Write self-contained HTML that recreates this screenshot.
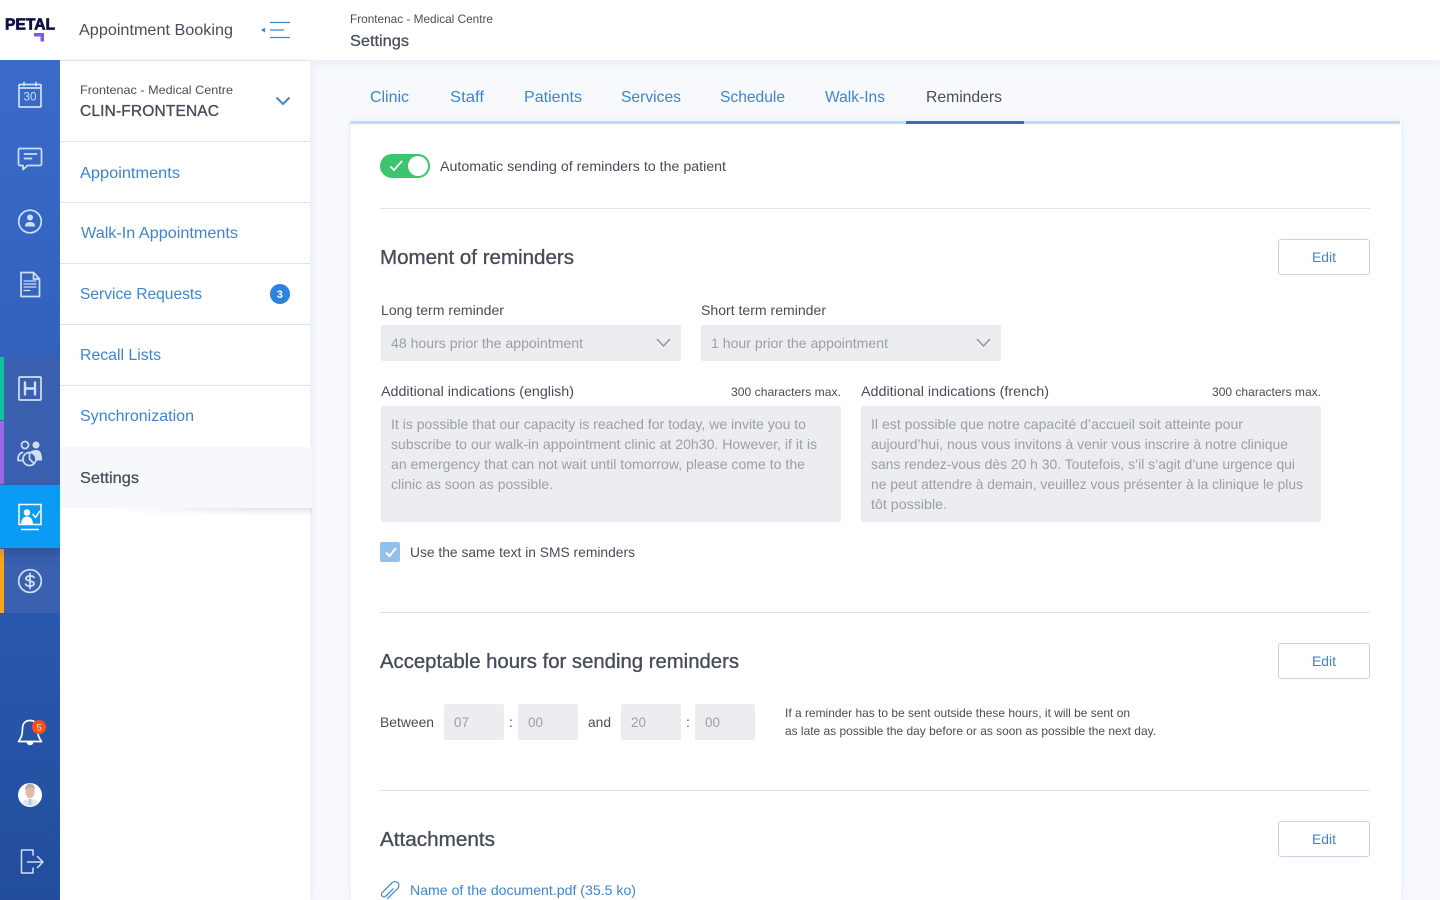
<!DOCTYPE html>
<html lang="en"><head><meta charset="utf-8"><title>Settings</title>
<style>
html,body{margin:0;padding:0;width:1440px;height:900px;overflow:hidden;background:#f7f9fd;font-family:"Liberation Sans",sans-serif}
div{position:absolute;box-sizing:border-box}
#r{left:0;top:0;width:1440px;height:900px;overflow:hidden}
svg{position:absolute;left:0;top:0}
.g{background:#ebedf0;border-radius:2px}
.l{background:#d8e3ea;height:1px}
.m{left:60px;width:250px;height:1px;background:#dce5ec}
.e{left:1278px;width:92px;height:36px;border:1px solid #c5d0e2;border-radius:3px;background:#fff}
text{font-family:"Liberation Sans",sans-serif;font-size:14px;fill:#474d5a}
.b{fill:#3d85d0;font-size:16px}
.h{font-size:20px;stroke:#474d5a;stroke-width:.35px}
.f{fill:#9b9fa6}
.s{font-size:12px}
.i{fill:none;stroke:#d0dff6;stroke-width:1.7;stroke-linecap:round;stroke-linejoin:round}
</style></head><body>
<div id="r">
<div style="left:310px;top:0;width:1130px;height:60px;background:#fff;box-shadow:0 2px 8px rgba(120,150,200,.14)"></div>
<div style="left:0;top:0;width:310px;height:60px;background:#fff"></div>
<div style="left:0;top:60px;width:60px;height:840px;background:linear-gradient(180deg,#3a6bcb 0%,#2f5fb8 45%,#224d9d 100%)"></div>
<div style="left:0;top:357px;width:60px;height:256px;background:#3a60af"></div>
<div style="left:0;top:357px;width:4px;height:63px;background:#12c09c"></div>
<div style="left:0;top:421px;width:4px;height:63px;background:#9b68e8"></div>
<div style="left:0;top:549px;width:4px;height:64px;background:#fba71b"></div>
<div style="left:0;top:485px;width:60px;height:63px;background:#0a9bf4;box-shadow:0 5px 10px rgba(20,40,90,.3)"></div>
<div style="left:60px;top:60px;width:250px;height:840px;background:#fff;box-shadow:2px 0 8px rgba(120,150,200,.12)"></div>
<div class="m" style="top:60px"></div><div class="m" style="top:141px"></div><div class="m" style="top:202px"></div><div class="m" style="top:263px"></div><div class="m" style="top:324px"></div><div class="m" style="top:385px"></div>
<div style="left:60px;top:447px;width:252px;height:61px;background:#f6f8fc"></div>
<div style="left:110px;top:508px;width:202px;height:8px;background:linear-gradient(180deg,rgba(60,70,90,.13),rgba(60,70,90,0));-webkit-mask-image:linear-gradient(90deg,transparent,#000 70%);mask-image:linear-gradient(90deg,transparent,#000 70%)"></div>
<div style="left:351px;top:122px;width:1050px;height:778px;background:#fff;box-shadow:0 0 8px rgba(120,150,210,.16)"></div>
<div style="left:350px;top:121px;width:1050px;height:3px;background:#c5d9f3"></div>
<div style="left:906px;top:121px;width:118px;height:3px;background:#3a6db9"></div>
<div style="left:380px;top:154px;width:50px;height:24px;border-radius:12px;background:#3cc46f"></div>
<div style="left:408px;top:156px;width:20px;height:20px;border-radius:50%;background:#fff"></div>
<div class="l" style="left:380px;top:208px;width:990px"></div>
<div class="l" style="left:380px;top:612px;width:990px"></div>
<div class="l" style="left:380px;top:790px;width:990px"></div>
<div class="e" style="top:239px"></div><div class="e" style="top:643px"></div><div class="e" style="top:821px"></div>
<div class="g" style="left:381px;top:325px;width:300px;height:36px"></div>
<div class="g" style="left:701px;top:325px;width:300px;height:36px"></div>
<div class="g" style="left:381px;top:406px;width:460px;height:116px"></div>
<div class="g" style="left:861px;top:406px;width:460px;height:116px"></div>
<div style="left:380px;top:542px;width:20px;height:20px;border-radius:2px;background:#93c1ee"></div>
<div class="g" style="left:444px;top:704px;width:60px;height:36px"></div>
<div class="g" style="left:518px;top:704px;width:60px;height:36px"></div>
<div class="g" style="left:621px;top:704px;width:60px;height:36px"></div>
<div class="g" style="left:695px;top:704px;width:60px;height:36px"></div>

<svg width="1440" height="900" viewBox="0 0 1440 900" xmlns="http://www.w3.org/2000/svg">
<!-- logo -->
<text x="5" y="29.500" textLength="50" lengthAdjust="spacingAndGlyphs" style="font-size:15.500px;font-weight:700;fill:#0e0f48;stroke:#0e0f48;stroke-width:.7px">PETAL</text>
<path d="M34 33h10v8.500h-3.500v-5H34z" fill="#7b5be6"/>
<!-- collapse icon -->
<path d="M270 22.500h20M270 30h14M270 37.500h20" fill="none" stroke="#3f86cf" stroke-width="1.200"/>
<path d="M261 30l4-2.500v5z" fill="#3f86cf"/>
<!-- chevrons -->
<path d="M276.500 97.500l6.500 6.500 6.500-6.500" fill="none" stroke="#3f86cf" stroke-width="2"/>
<path d="M657 339l6.500 7 6.500-7M977 339l6.500 7 6.500-7" fill="none" stroke="#8e939b" stroke-width="1.400"/>
<!-- nav icons -->
<g class="i">
<rect x="19" y="84.500" width="22" height="22.500" rx="1"/><path d="M19 88h22M24 82.500v3M36 82.500v3"/>
<path d="M20 148.500h20a1.500 1.500 0 0 1 1.500 1.500v14a1.500 1.500 0 0 1-1.500 1.500H27.500l-4.500 4v-4h-3a1.500 1.500 0 0 1-1.500-1.500v-14a1.500 1.500 0 0 1 1.500-1.500z"/><path d="M24.500 154h12M24.500 158.500h7"/>
<circle cx="30" cy="221.500" r="11.300"/>
<path d="M21 272.500h12.500l6 6.500v17.500H21zM33.500 272.500v6.500h6"/>
<path d="M24 281h12M24 284h12M24 287h12M24 290.500h6" stroke-width="1.200"/>
<rect x="19" y="377" width="22" height="23" rx="1"/>
<path d="M25 382.500v12M35 382.500v12M25 388.500h10" stroke-width="2.400"/>
<circle cx="25" cy="445" r="3.500"/><circle cx="29.500" cy="459" r="6.500" style="fill:#3a60af"/><path d="M29.500 459v-6.500M29.500 459l4.500 4.500"/><path d="M22.500 452.500c-3 .5-4.500 3.500-4.500 8h4.500"/>
<circle cx="30" cy="581" r="11.300"/>
<path d="M34 577.500c-1-2.200-7.500-2.200-8 .7-.5 3.200 8 2 8 5.600 0 3-7 3-8.500.4M30 573.500v15" stroke-width="1.800"/>
<path d="M30 720.500c-5.500 0-7.500 4-7.500 8.500 0 6-1.500 9-4 12.500h23c-2.500-3.500-4-6.500-4-12.500 0-4.500-2-8.500-7.500-8.500z" style="stroke:#fff"/>
<path d="M33 855v-5h-11.500v23H33v-5M27.500 862H43M37.500 856.500l5.500 5.500-5.500 5.500" stroke-width="1.500"/>
</g>
<path d="M25 226.500c0-3.500 2-4.500 5-4.500s5 1 5 4.500z" fill="#d0dff6"/><circle cx="30" cy="217.500" r="3" fill="#d0dff6"/>
<path d="M26.500 742h7a3.500 3.200 0 0 1-7 0z" fill="#fff"/>
<circle cx="36" cy="445" r="3.500" fill="#d0dff6"/><path d="M30.500 451.500c1-1 3-1.500 5.500-1.500 4 0 6 2.500 6 10.500h-5.500c0-4-2.500-7.500-6-9z" fill="#d0dff6"/>
<!-- active icon -->
<g fill="none" stroke="#fff" stroke-width="1.500"><rect x="19" y="504.500" width="22" height="20"/><path d="M21 529.500h18"/><path d="M33 514.500l2.500 3 4-6" stroke-linecap="round" stroke-linejoin="round"/></g>
<circle cx="27" cy="512.500" r="3.300" fill="#fff"/><path d="M21 524.500c0-6 3-8 6-8s6 2 6 8z" fill="#fff"/>
<!-- bell badge -->
<circle cx="39" cy="727" r="7" fill="#f4511e"/><text x="36.500" y="730.500" style="font-size:9.500px;fill:#fde2d0">5</text>
<!-- avatar -->
<circle cx="30" cy="795" r="12" fill="#fff"/>
<path d="M22 803c1.500-3 4.500-4 8-4s6.500 1 8 4a12 12 0 0 1-16 0z" fill="#e2e7ee"/>
<path d="M29 799h2l.5 6h-3z" fill="#b7c6d8"/>
<ellipse cx="30" cy="792" rx="4.600" ry="6.200" fill="#dfbba5"/>
<path d="M25 790.500c0-5 2.500-7 5-7s5 2 5 7c-1-2-2-2.500-5-2.500s-4 .5-5 2.500z" fill="#b5b0a8"/>
<!-- toggle check & checkbox check -->
<path d="M390.500 166.500l3.500 3.500 8-9" fill="none" stroke="#fff" stroke-width="1.700"/>
<path d="M386 552.500l3.500 3.500 6.500-8" fill="none" stroke="#fff" stroke-width="2"/>
<!-- paperclip -->
<path d="M1 -4V7a2.500 2.500 0 0 1-5 0V-7a4 4 0 0 1 8 0V8" fill="none" stroke="#3d85d0" stroke-width="1.200" transform="translate(390 890.500) rotate(45)"/>
<!-- badge -->
<circle cx="280" cy="294" r="10" fill="#2d82de"/>
<text x="276.700" y="298" style="font-size:11px;font-weight:700;fill:#fff">3</text>

<text x="79" y="35" textLength="154" lengthAdjust="spacingAndGlyphs" style="font-size:16px">Appointment Booking</text>
<text x="350" y="23" textLength="143" lengthAdjust="spacingAndGlyphs" class="s">Frontenac - Medical Centre</text>
<text x="350" y="46" textLength="59" lengthAdjust="spacingAndGlyphs" style="font-size:16px;stroke:#474d5a;stroke-width:.25px">Settings</text>
<text x="80" y="94" textLength="153" lengthAdjust="spacingAndGlyphs" class="s">Frontenac - Medical Centre</text>
<text x="80" y="116" textLength="139" lengthAdjust="spacing" style="font-size:15.500px;stroke:#474d5a;stroke-width:.35px">CLIN-FRONTENAC</text>
<text x="80" y="178" textLength="100" lengthAdjust="spacingAndGlyphs" class="b">Appointments</text>
<text x="81" y="238" textLength="157" lengthAdjust="spacingAndGlyphs" class="b">Walk-In Appointments</text>
<text x="80" y="299" textLength="122" lengthAdjust="spacingAndGlyphs" class="b">Service Requests</text>
<text x="80" y="360" textLength="81" lengthAdjust="spacingAndGlyphs" class="b">Recall Lists</text>
<text x="80" y="421" textLength="114" lengthAdjust="spacingAndGlyphs" class="b">Synchronization</text>
<text x="80" y="483" textLength="59" lengthAdjust="spacingAndGlyphs" style="font-size:16px;stroke:#474d5a;stroke-width:.25px">Settings</text>
<text x="370" y="102" textLength="39" lengthAdjust="spacingAndGlyphs" class="b">Clinic</text>
<text x="450" y="102" textLength="34" lengthAdjust="spacingAndGlyphs" class="b">Staff</text>
<text x="524" y="102" textLength="58" lengthAdjust="spacingAndGlyphs" class="b">Patients</text>
<text x="621" y="102" textLength="60" lengthAdjust="spacingAndGlyphs" class="b">Services</text>
<text x="720" y="102" textLength="65" lengthAdjust="spacingAndGlyphs" class="b">Schedule</text>
<text x="825" y="102" textLength="60" lengthAdjust="spacingAndGlyphs" class="b">Walk-Ins</text>
<text x="926" y="102" textLength="76" lengthAdjust="spacingAndGlyphs" style="font-size:16px">Reminders</text>
<text x="440" y="171" textLength="286" lengthAdjust="spacingAndGlyphs">Automatic sending of reminders to the patient</text>
<text x="380" y="264" textLength="194" lengthAdjust="spacingAndGlyphs" class="h">Moment of reminders</text>
<text x="1312" y="262" textLength="24" lengthAdjust="spacingAndGlyphs" class="b" style="font-size:14px">Edit</text>
<text x="381" y="315" textLength="123" lengthAdjust="spacingAndGlyphs">Long term reminder</text>
<text x="701" y="315" textLength="125" lengthAdjust="spacingAndGlyphs">Short term reminder</text>
<text x="391" y="348" textLength="192" lengthAdjust="spacingAndGlyphs" class="f">48 hours prior the appointment</text>
<text x="711" y="348" textLength="177" lengthAdjust="spacingAndGlyphs" class="f">1 hour prior the appointment</text>
<text x="381" y="396" textLength="193" lengthAdjust="spacingAndGlyphs">Additional indications (english)</text>
<text x="731" y="396" textLength="110" lengthAdjust="spacingAndGlyphs" class="s">300 characters max.</text>
<text x="861" y="396" textLength="188" lengthAdjust="spacingAndGlyphs">Additional indications (french)</text>
<text x="1212" y="396" textLength="109" lengthAdjust="spacingAndGlyphs" class="s">300 characters max.</text>
<text x="391" y="429" textLength="415" lengthAdjust="spacingAndGlyphs" class="f">It is possible that our capacity is reached for today, we invite you to</text>
<text x="391" y="449" textLength="426" lengthAdjust="spacingAndGlyphs" class="f">subscribe to our walk-in appointment clinic at 20h30. However, if it is</text>
<text x="391" y="469" textLength="414" lengthAdjust="spacingAndGlyphs" class="f">an emergency that can not wait until tomorrow, please come to the</text>
<text x="391" y="489" textLength="162" lengthAdjust="spacingAndGlyphs" class="f">clinic as soon as possible.</text>
<text x="871" y="429" textLength="372" lengthAdjust="spacingAndGlyphs" class="f">Il est possible que notre capacité d’accueil soit atteinte pour</text>
<text x="871" y="449" textLength="417" lengthAdjust="spacingAndGlyphs" class="f">aujourd’hui, nous vous invitons à venir vous inscrire à notre clinique</text>
<text x="871" y="469" textLength="424" lengthAdjust="spacingAndGlyphs" class="f">sans rendez-vous dès 20 h 30. Toutefois, s’il s’agit d’une urgence qui</text>
<text x="871" y="489" textLength="432" lengthAdjust="spacingAndGlyphs" class="f">ne peut attendre à demain, veuillez vous présenter à la clinique le plus</text>
<text x="871" y="509" textLength="76" lengthAdjust="spacingAndGlyphs" class="f">tôt possible.</text>
<text x="410" y="557" textLength="225" lengthAdjust="spacingAndGlyphs">Use the same text in SMS reminders</text>
<text x="380" y="668" textLength="359" lengthAdjust="spacingAndGlyphs" class="h">Acceptable hours for sending reminders</text>
<text x="1312" y="666" textLength="24" lengthAdjust="spacingAndGlyphs" class="b" style="font-size:14px">Edit</text>
<text x="380" y="727" textLength="54" lengthAdjust="spacingAndGlyphs">Between</text>
<text x="454" y="727" textLength="15" lengthAdjust="spacingAndGlyphs" class="f">07</text>
<text x="509" y="727">:</text>
<text x="528" y="727" textLength="15" lengthAdjust="spacingAndGlyphs" class="f">00</text>
<text x="588" y="727" textLength="23" lengthAdjust="spacingAndGlyphs">and</text>
<text x="631" y="727" textLength="15" lengthAdjust="spacingAndGlyphs" class="f">20</text>
<text x="686" y="727">:</text>
<text x="705" y="727" textLength="15" lengthAdjust="spacingAndGlyphs" class="f">00</text>
<text x="785" y="717" textLength="345" lengthAdjust="spacingAndGlyphs" class="s">If a reminder has to be sent outside these hours, it will be sent on</text>
<text x="785" y="735" textLength="371" lengthAdjust="spacingAndGlyphs" class="s">as late as possible the day before or as soon as possible the next day.</text>
<text x="380" y="846" textLength="115" lengthAdjust="spacingAndGlyphs" class="h">Attachments</text>
<text x="1312" y="844" textLength="24" lengthAdjust="spacingAndGlyphs" class="b" style="font-size:14px">Edit</text>
<text x="410" y="895" textLength="226" lengthAdjust="spacingAndGlyphs" class="b" style="font-size:14px">Name of the document.pdf (35.5 ko)</text>
<text x="23.500" y="100.500" textLength="13" lengthAdjust="spacingAndGlyphs" style="font-size:12px;fill:#d0dff6">30</text>
</svg>
</div>
</body></html>
